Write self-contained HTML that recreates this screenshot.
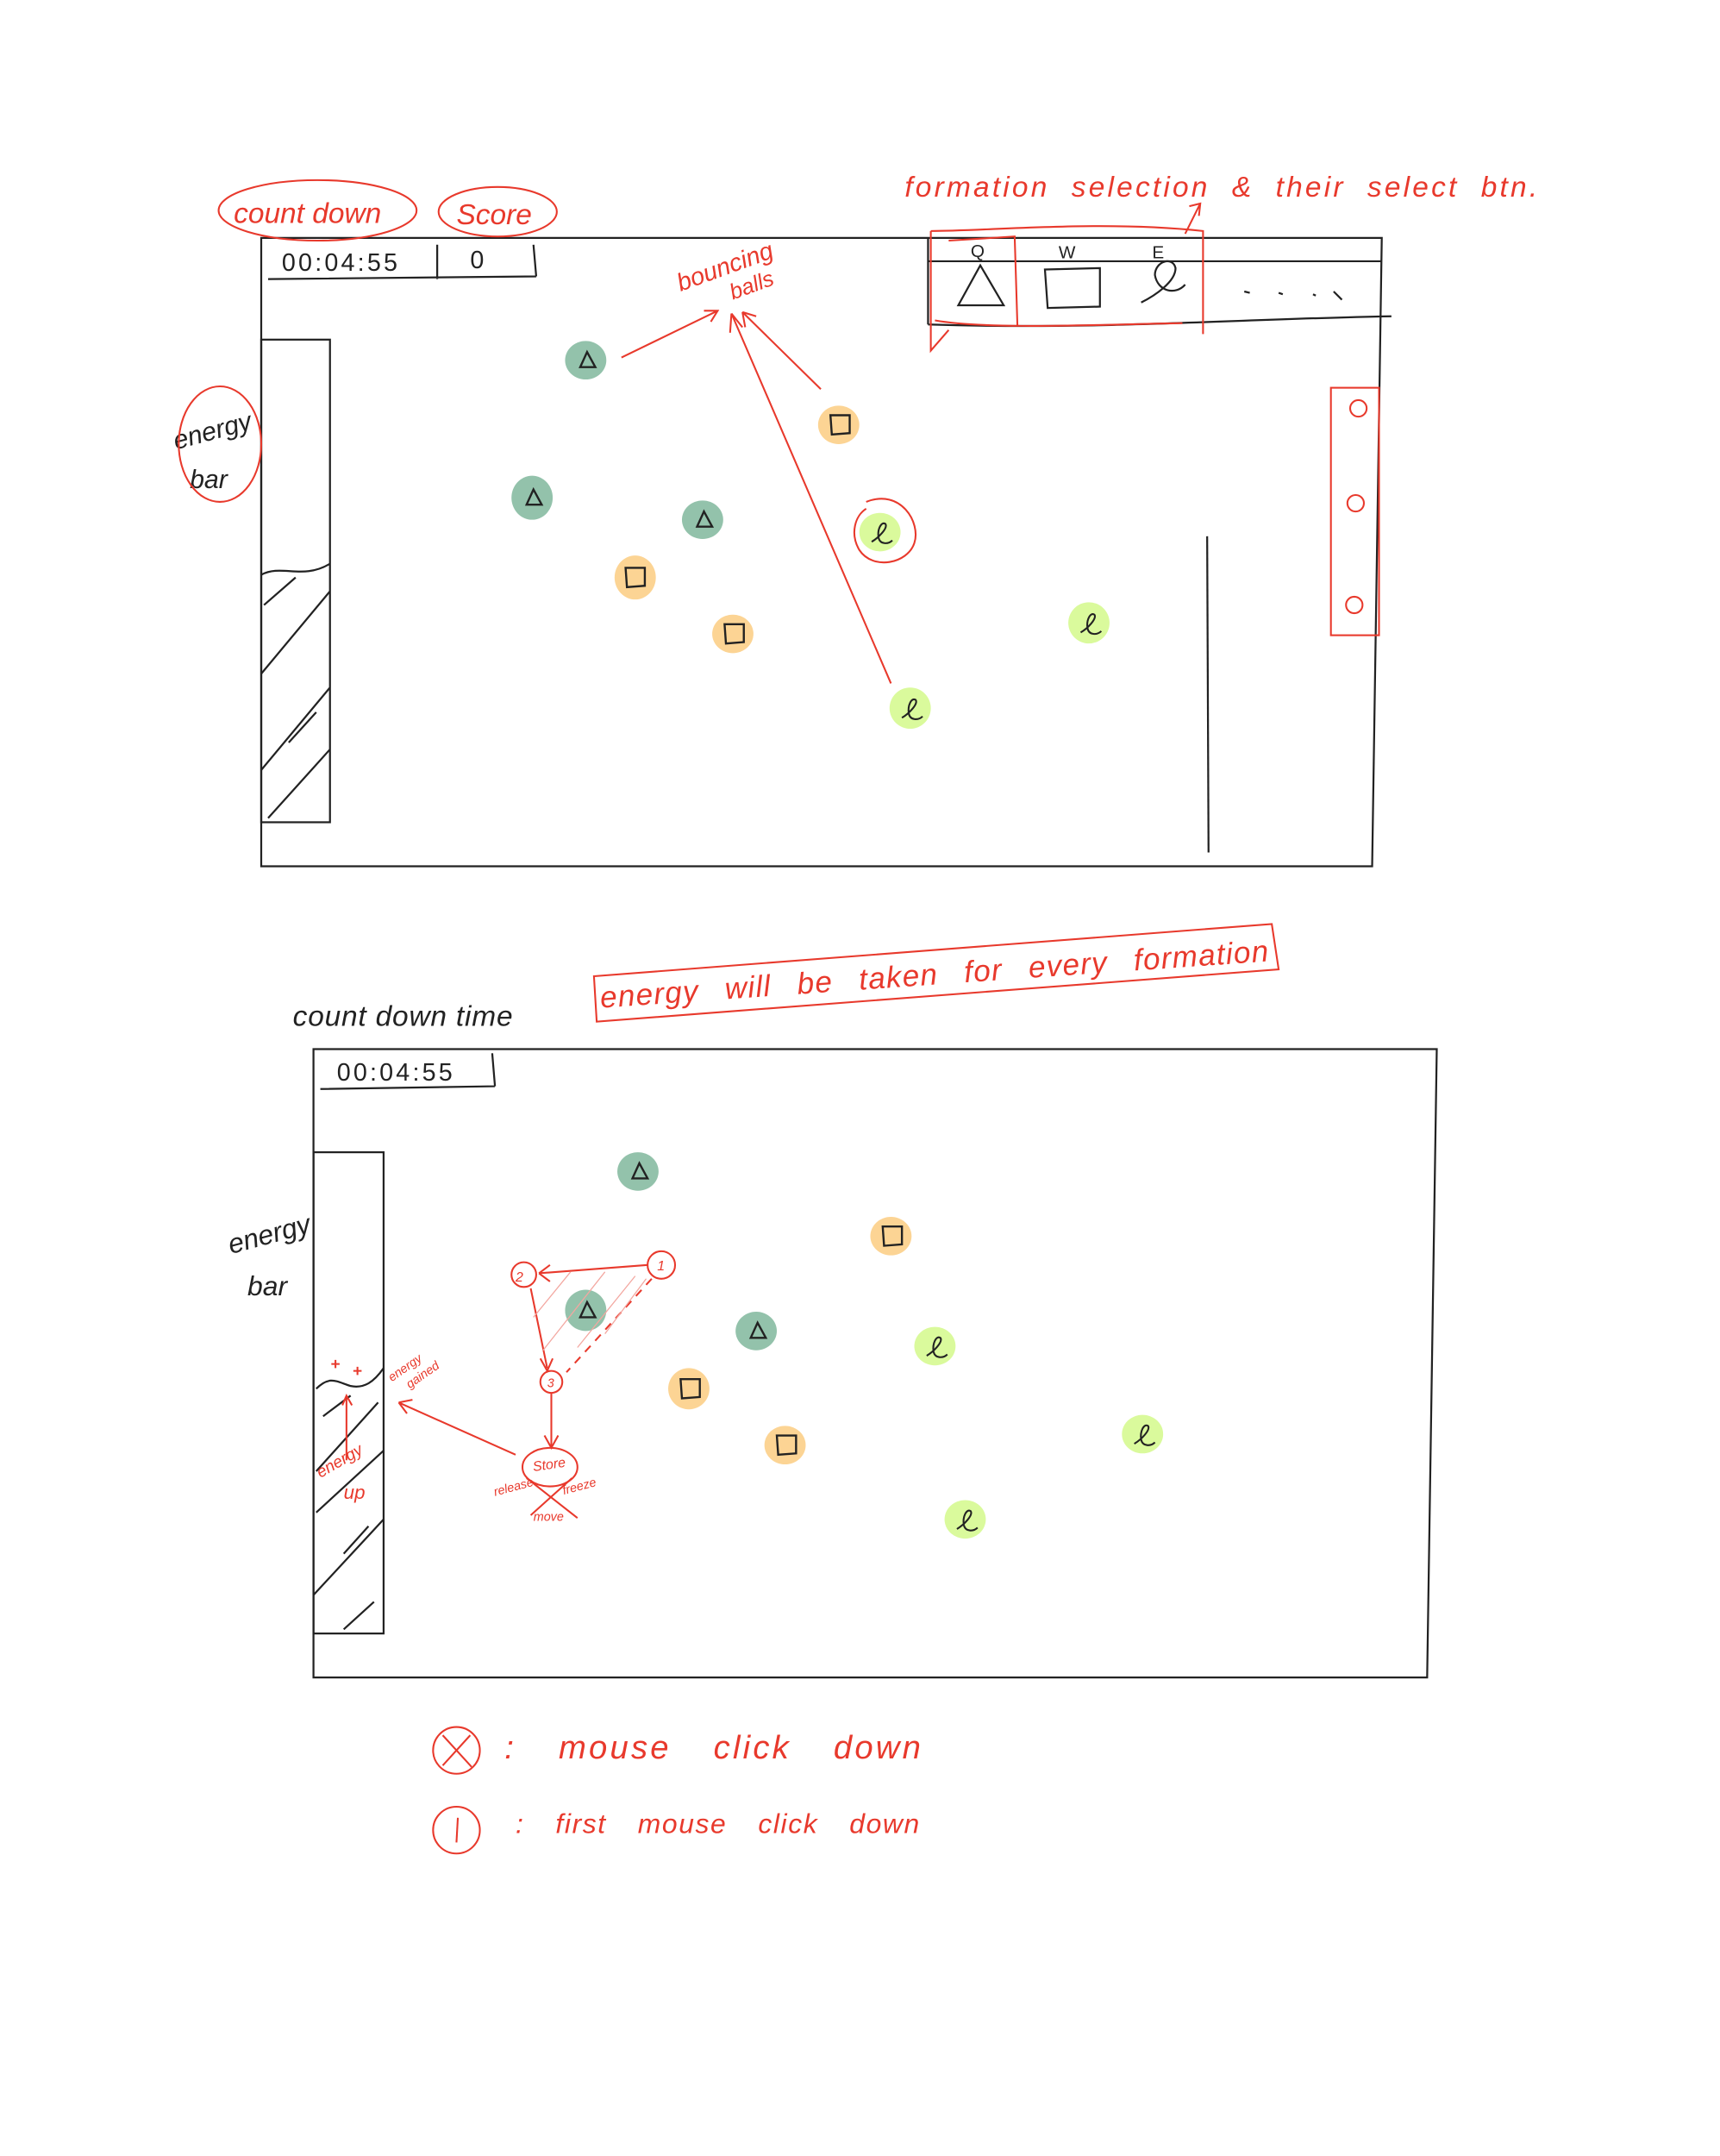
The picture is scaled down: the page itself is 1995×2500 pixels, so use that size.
<!DOCTYPE html>
<html><head><meta charset="utf-8"><style>
html,body{margin:0;padding:0;background:#fff;}
svg{display:block;}
text{font-family:"Liberation Sans",sans-serif;}
</style></head><body>
<svg width="1995" height="2500" viewBox="0 0 1251 1568" preserveAspectRatio="none" xmlns="http://www.w3.org/2000/svg">
<defs>
<g id="tri"><path d="M-5,5 L0,-6 L6,5 Z" fill="none" stroke="#222" stroke-width="1.5"/></g>
<g id="sq"><path d="M-7,-7 L7,-7 L7,6 L-6,7 Z" fill="none" stroke="#222" stroke-width="1.5"/></g>
<g id="ee"><path d="M-7,5 C-2,2 5,-5 3,-8 C0,-10 -3,-4 -2,2 C-1,7 5,7 8,4" fill="none" stroke="#222" stroke-width="1.3"/></g>
</defs>
<g fill="none" stroke="#222" stroke-width="1.4">
<path d="M190,173 L1005,173 L998,630 L190,630 Z"/>
<path d="M195,203 L390,201 M318,178 L318,203 M388,178 L390,201"/>
<rect x="190" y="247" width="50" height="351"/>
<path d="M190,418 C205,410 220,422 240,410"/>
<path d="M192,440 L215,420 M190,490 L240,430 M190,560 L240,500 M195,595 L240,545 M210,540 L230,518"/>
<path d="M675,173 L675,236 M675,190 L1005,190 M675,236 C800,240 900,232 1012,230"/>
<path d="M713,193 L697,222 L730,222 Z M760,196 L800,195 L800,223 L762,224 Z"/>
<path d="M830,220 C840,215 855,205 855,195 C853,186 840,190 840,200 C842,212 855,215 862,207"/>
<path d="M905,212 l4,1 M930,213 l3,1 M955,214 l2,1 M970,212 l6,6"/>
<path d="M878,390 L879,620"/>
<path d="M228,763 L1045,763 L1038,1220 L228,1220 Z"/>
<path d="M233,792 L360,790 M358,766 L360,790"/>
<rect x="228" y="838" width="51" height="350"/>
<path d="M230,1010 C240,1000 245,1005 255,1008 C265,1010 272,1005 279,995"/>
<path d="M235,1030 L255,1015 M230,1070 L275,1020 M230,1100 L279,1055 M228,1160 L279,1105 M250,1185 L272,1165 M250,1130 L268,1110"/>
</g>
<g fill="#222" font-size="18">
<text x="205" y="197" letter-spacing="2">00:04:55</text>
<text x="342" y="195">0</text>
<text x="245" y="786" letter-spacing="2">00:04:55</text>
<text x="706" y="187" font-size="13">Q</text>
<text x="770" y="188" font-size="13">W</text>
<text x="838" y="188" font-size="13">E</text>
<text x="213" y="746" font-size="21" font-style="italic" letter-spacing="0.5">count down time</text>
<text x="168" y="912" font-size="20" font-style="italic" transform="rotate(-15 168 912)">energy</text>
<text x="180" y="942" font-size="20" font-style="italic">bar</text>
<text x="128" y="327" font-size="19" font-style="italic" transform="rotate(-15 128 327)">energy</text>
<text x="138" y="355" font-size="19" font-style="italic">bar</text>
</g>
<g>
<g fill="#93c2ab"><ellipse cx="426" cy="262" rx="15" ry="14"/><ellipse cx="387" cy="362" rx="15" ry="16"/><ellipse cx="511" cy="378" rx="15" ry="14"/>
<ellipse cx="464" cy="852" rx="15" ry="14"/><ellipse cx="426" cy="953" rx="15" ry="15"/><ellipse cx="550" cy="968" rx="15" ry="14"/></g>
<g fill="#fcd494"><ellipse cx="610" cy="309" rx="15" ry="14"/><ellipse cx="462" cy="420" rx="15" ry="16"/><ellipse cx="533" cy="461" rx="15" ry="14"/>
<ellipse cx="648" cy="899" rx="15" ry="14"/><ellipse cx="501" cy="1010" rx="15" ry="15"/><ellipse cx="571" cy="1051" rx="15" ry="14"/></g>
<g fill="#dafa9c"><ellipse cx="640" cy="387" rx="15" ry="14"/><ellipse cx="792" cy="453" rx="15" ry="15"/><ellipse cx="662" cy="515" rx="15" ry="15"/>
<ellipse cx="680" cy="979" rx="15" ry="14"/><ellipse cx="831" cy="1043" rx="15" ry="14"/><ellipse cx="702" cy="1105" rx="15" ry="14"/></g>
<use href="#tri" x="427" y="262"/><use href="#tri" x="388" y="362"/><use href="#tri" x="512" y="378"/>
<use href="#tri" x="465" y="852"/><use href="#tri" x="427" y="953"/><use href="#tri" x="551" y="968"/>
<use href="#sq" x="611" y="309"/><use href="#sq" x="462" y="420"/><use href="#sq" x="534" y="461"/>
<use href="#sq" x="649" y="899"/><use href="#sq" x="502" y="1010"/><use href="#sq" x="572" y="1051"/>
<use href="#ee" x="641" y="389"/><use href="#ee" x="793" y="455"/><use href="#ee" x="663" y="517"/>
<use href="#ee" x="681" y="981"/><use href="#ee" x="832" y="1045"/><use href="#ee" x="703" y="1107"/>
</g>
<g fill="none" stroke="#e8392c" stroke-width="1.3">
<ellipse cx="231" cy="153" rx="72" ry="22"/>
<ellipse cx="362" cy="154" rx="43" ry="18"/>
<ellipse cx="160" cy="323" rx="30" ry="42"/>
<path d="M452,260 L522,226 M512,226 L522,226 L517,234"/>
<path d="M597,283 L540,227 M540,227 L542,238 M540,227 L550,230"/>
<path d="M648,497 L532,228 M532,228 L531,242 M532,228 L540,238"/>
<path d="M630,365 C655,355 670,380 665,395 C660,410 635,415 625,400 C618,388 622,375 630,370"/>
<path d="M677,168 C720,168 800,160 875,168 L875,243 M677,168 L677,255 L690,240 M690,175 L738,172 L740,237 M680,233 C720,240 800,236 860,235"/>
<path d="M862,170 L873,148 M865,150 L873,148 L872,157"/>
<rect x="968" y="282" width="35" height="180"/>
<circle cx="988" cy="297" r="6"/><circle cx="986" cy="366" r="6"/><circle cx="985" cy="440" r="6"/>
<path d="M432,710 L925,672 L930,705 L434,743 Z"/>
<circle cx="481" cy="920" r="10"/><circle cx="381" cy="927" r="9"/><circle cx="401" cy="1005" r="8"/>
<path d="M471,920 L392,926 M392,926 L400,920 M392,926 L400,932"/>
<path d="M386,937 L398,995 M393,988 L398,997 L402,988"/>
<path d="M474,930 L412,998" stroke-dasharray="6,5"/>
<path d="M388,958 L415,925 M395,982 L440,925 M420,980 L462,928 M440,970 L470,930" stroke="#f3a7a0" stroke-width="0.8"/>
<path d="M401,1013 L401,1052 M396,1044 L401,1053 L406,1044"/>
<ellipse cx="400" cy="1067" rx="20" ry="14"/>
<path d="M383,1075 L420,1104 M416,1075 L386,1102"/>
<path d="M375,1058 L290,1020 M290,1020 L300,1018 M290,1020 L296,1028"/>
<path d="M252,1062 L252,1017 M249,1022 L252,1015 L256,1022"/>
<path d="M241,992 l6,0 M244,989 l0,6 M257,997 l6,0 M260,994 l0,6"/>
<circle cx="332" cy="1273" r="17"/><path d="M322,1262 L343,1285 M342,1262 L322,1284"/>
<circle cx="332" cy="1331" r="17"/><path d="M333,1322 L332,1340"/>
</g>
<g fill="#e8392c" font-style="italic">
<text x="170" y="162" font-size="21">count down</text>
<text x="332" y="163" font-size="21">Score</text>
<text x="658" y="143" font-size="21" letter-spacing="2" word-spacing="8">formation selection &amp; their select btn.</text>
<text x="495" y="212" font-size="18" transform="rotate(-20 495 212)">bouncing</text>
<text x="533" y="218" font-size="16" transform="rotate(-20 533 218)">balls</text>
<text x="437" y="733" font-size="22" transform="rotate(-4 437 733)" letter-spacing="0.8" word-spacing="12">energy will be taken for every formation</text>
<text x="375" y="932" font-size="10">2</text><text x="478" y="924" font-size="10">1</text><text x="398" y="1009" font-size="9">3</text>
<text x="388" y="1070" font-size="10" transform="rotate(-8 388 1070)">Store</text>
<text x="360" y="1088" font-size="9" transform="rotate(-15 360 1088)">release</text>
<text x="410" y="1087" font-size="9" transform="rotate(-15 410 1087)">freeze</text>
<text x="388" y="1106" font-size="9">move</text>
<text x="285" y="1005" font-size="9" transform="rotate(-35 285 1005)">energy</text>
<text x="298" y="1010" font-size="9" transform="rotate(-35 298 1010)">gained</text>
<text x="233" y="1075" font-size="12" transform="rotate(-30 233 1075)">energy</text>
<text x="250" y="1090" font-size="14">up</text>
<text x="367" y="1279" font-size="24" letter-spacing="2" word-spacing="22">:  mouse click down</text>
<text x="375" y="1333" font-size="20" letter-spacing="1" word-spacing="16">:  first mouse click down</text>
</g>
</svg>
</body></html>
